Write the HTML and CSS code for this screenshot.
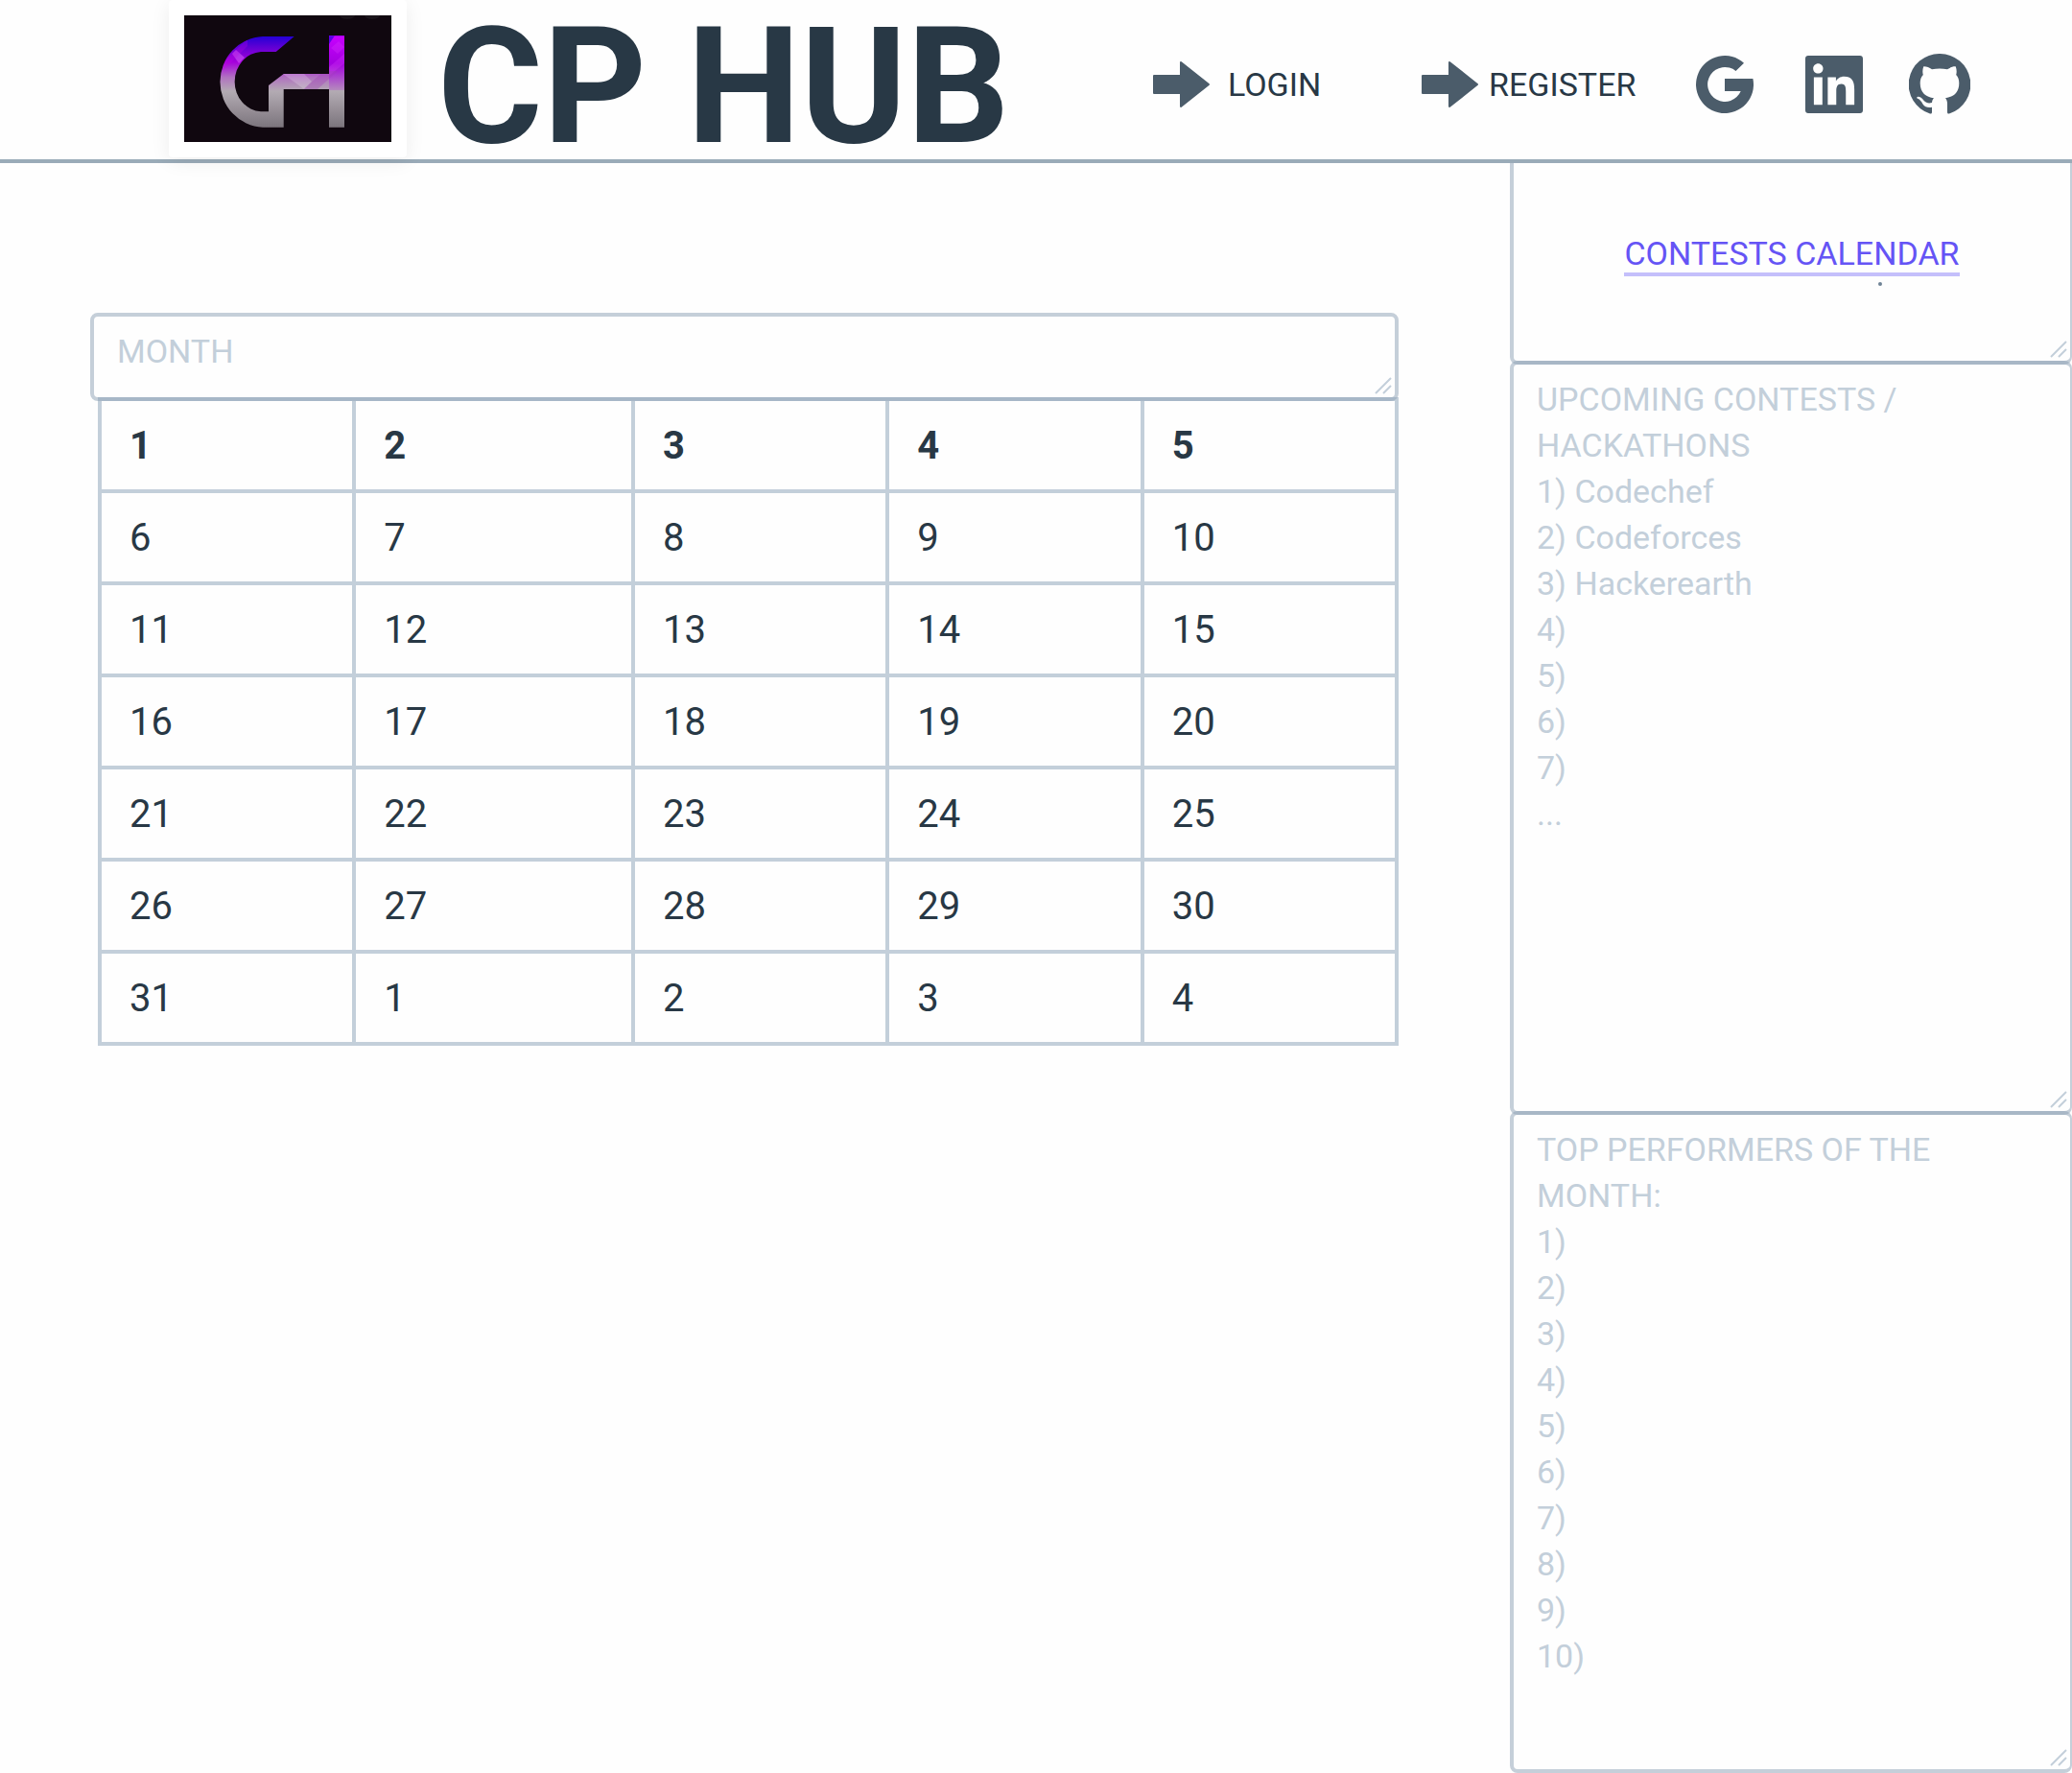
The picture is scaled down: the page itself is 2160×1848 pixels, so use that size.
FILE: index.html
```html
<!DOCTYPE html>
<html lang="en">
<head>
<meta charset="utf-8">
<meta name="viewport" content="width=device-width, initial-scale=1">
<title>CP HUB</title>
<link rel="stylesheet" href="styles.css">
</head>
<body>
<header class="header">
  <div class="logo-card">
    <svg class="logo" viewBox="0 0 216 132" role="img" aria-label="GH logo">
      <defs>
        <linearGradient id="mark" gradientUnits="userSpaceOnUse" x1="0" y1="22" x2="0" y2="117">
          <stop offset="0" stop-color="#2400d6"/>
          <stop offset=".14" stop-color="#6a00d4"/>
          <stop offset=".28" stop-color="#a500dc"/>
          <stop offset=".45" stop-color="#b173c0"/>
          <stop offset=".6" stop-color="#b3abb3"/>
          <stop offset="1" stop-color="#7b747c"/>
        </linearGradient>
        <linearGradient id="stem" gradientUnits="userSpaceOnUse" x1="0" y1="22" x2="0" y2="78">
          <stop offset="0" stop-color="#c800ff"/>
          <stop offset=".5" stop-color="#a400e0"/>
          <stop offset="1" stop-color="#b48abd"/>
        </linearGradient>
        <clipPath id="shape">
          <path d="M114.7 22H82A46.7 47.4 0 0 0 82 116.7H103.7V77H151V116.7H167V21.3H151V61H103.7L88 73V100.3H80A29 31.2 0 0 1 80 38H95.7Z"/>
        </clipPath>
      </defs>
      <rect width="216" height="132" fill="#10070f"/>
      <path d="M162 0h16a8 4 0 0 1-16 0M188 0h16a8 4 0 0 1-16 0" fill="#1a141a"/>
      <g clip-path="url(#shape)">
        <rect width="216" height="132" fill="url(#mark)"/>
        <rect x="151" y="21" width="16" height="57" fill="url(#stem)"/>
        <path d="M151 21h6l-6 9z" fill="#5a00e8"/>
        <path d="M153 34l8-7 6 6-7 7zM151 54l16-14v10l-16 13z" fill="#e040ff" opacity=".25"/>
        <path d="M124 77l22-19h14l-21 19z" fill="#a040b8" opacity=".35"/>
        <path d="M103 61h22l8 8-8 8z" fill="#fff" opacity=".2"/>
        <path d="M50 40l4-4 9 8-6 6z" fill="#e070ff" opacity=".45"/>
        <path d="M40 50l26-26v8L40 58z" fill="#c800e8" opacity=".25"/>
      </g>
    </svg>
  </div>
  <h1 class="title">CP HUB</h1>
  <nav class="nav">
    <a class="nav-link nav-link-login" href="#login">
      <svg class="arrow" viewBox="0 0 60 50" aria-hidden="true"><path d="M1 16h28V2l29 23-29 23V34H1z"/></svg>
      LOGIN
    </a>
    <a class="nav-link nav-link-register" href="#register">
      <svg class="arrow" viewBox="0 0 60 50" aria-hidden="true"><path d="M1 16h28V2l29 23-29 23V34H1z"/></svg>
      REGISTER
    </a>
    <div class="social">
      <a href="#google" aria-label="Google"><svg class="social-icon" viewBox="0 0 64 64"><path d="M52 9.7A30 30 0 1 0 61.4 26H32V39H48.7A18 18 0 1 1 43.5 18Z"/></svg></a>
      <a href="#linkedin" aria-label="LinkedIn"><svg class="social-icon" viewBox="-1.6 -.8 25.6 25.6"><path d="M20.447 20.452h-3.554v-5.569c0-1.328-.027-3.037-1.852-3.037-1.853 0-2.136 1.445-2.136 2.939v5.667H9.351V9h3.414v1.561h.046c.477-.9 1.637-1.85 3.37-1.85 3.601 0 4.267 2.37 4.267 5.455v6.286zM5.337 7.433c-1.144 0-2.063-.926-2.063-2.065 0-1.138.92-2.063 2.063-2.063 1.14 0 2.064.925 2.064 2.063 0 1.139-.925 2.065-2.064 2.065zm1.782 13.019H3.555V9h3.564v11.452zM22.8 0H1.2C.5 0 0 .5 0 1.2v21.6C0 23.5.5 24 1.2 24h21.6c.7 0 1.2-.5 1.2-1.2V1.2C24 .5 23.5 0 22.8 0z"/></svg></a>
      <a href="#github" aria-label="GitHub"><svg class="social-icon" viewBox="0 0 64 64"><path d="M32 0A32 32 0 0 0 22 62.500Q24 63 24 61V55.700C20 56.300 17 56 14.500 52.500C13 50 11.500 47.500 9 46.800C7.800 46.300 8 45 9.500 44.800C12.500 44.500 14 47 15.700 49C18 51.600 21 51.800 24 51C24.200 49 24.800 47.500 26 46.300C18 45 11.700 41 11.700 30.700C11.700 27 12.700 24 14.800 22C14 19.500 14.200 16 15.200 13.400C18 13.200 21 14.200 24 16.300C29 15.200 35 15.200 40 16.300C43 14.200 46 13.200 48.800 13.400C49.800 16 50 19.500 49.200 22C51.300 24 52.300 27 52.300 30.700C52.300 41 46 45 38 46.300C39.500 48 40 50 40 52V61Q40 63 42 62.500A32 32 0 0 0 32 0Z"/></svg></a>
    </div>
  </nav>
</header>
<div class="content">
  <main class="calendar">
    <div class="panel panel-month">
      <textarea class="panel-text" aria-label="Month">MONTH</textarea>
      <svg class="grip" viewBox="0 0 18 18" aria-hidden="true"><path d="M1 17 17 1M9 17l8-8"/></svg>
    </div>
    <table class="days">
      <colgroup><col class="col"><col class="col-wide"><col class="col"><col class="col"><col class="col"></colgroup>
      <thead>
        <tr><th>1</th><th>2</th><th>3</th><th>4</th><th>5</th></tr>
      </thead>
      <tbody>
        <tr><td>6</td><td>7</td><td>8</td><td>9</td><td>10</td></tr>
        <tr><td>11</td><td>12</td><td>13</td><td>14</td><td>15</td></tr>
        <tr><td>16</td><td>17</td><td>18</td><td>19</td><td>20</td></tr>
        <tr><td>21</td><td>22</td><td>23</td><td>24</td><td>25</td></tr>
        <tr><td>26</td><td>27</td><td>28</td><td>29</td><td>30</td></tr>
        <tr><td>31</td><td>1</td><td>2</td><td>3</td><td>4</td></tr>
      </tbody>
    </table>
  </main>
  <aside class="sidebar">
    <section class="panel panel-link">
      <a class="calendar-link" href="#calendar">CONTESTS CALENDAR</a>
      <span class="dot"></span>
      <svg class="grip" viewBox="0 0 18 18" aria-hidden="true"><path d="M1 17 17 1M9 17l8-8"/></svg>
    </section>
    <section class="panel panel-upcoming">
      <textarea class="panel-text" aria-label="Upcoming contests and hackathons">UPCOMING CONTESTS /
HACKATHONS
1) Codechef
2) Codeforces
3) Hackerearth
4)
5)
6)
7)
...</textarea>
      <svg class="grip" viewBox="0 0 18 18" aria-hidden="true"><path d="M1 17 17 1M9 17l8-8"/></svg>
    </section>
    <section class="panel panel-top">
      <textarea class="panel-text" aria-label="Top performers of the month">TOP PERFORMERS OF THE
MONTH:
1)
2)
3)
4)
5)
6)
7)
8)
9)
10)</textarea>
      <svg class="grip" viewBox="0 0 18 18" aria-hidden="true"><path d="M1 17 17 1M9 17l8-8"/></svg>
    </section>
  </aside>
</div>
</body>
</html>
```
FILE: styles.css
```css
* {
  box-sizing: border-box;
}

body {
  display: flex;
  flex-direction: column;
  min-height: 100vh;
  margin: 0;
  background: #fefefe;
  color: #283845;
  font-family: Roboto, "Liberation Sans", sans-serif;
  font-size: 34px;
  line-height: 48px;
}

a {
  color: inherit;
  text-decoration: none;
}

.header {
  display: flex;
  align-items: flex-start;
  height: 170px;
  padding: 0 106px 0 176px;
  border-bottom: 4px solid #9aabb8;
}

.logo-card {
  flex: none;
  padding: 16px;
  border-radius: 4px;
  background: #fff;
  box-shadow: 0 4px 20px rgba(0, 0, 0, 0.07);
}

.logo {
  display: block;
  width: 216px;
  height: 132px;
}

.title {
  margin: 0 0 0 32px;
  font-size: 168px;
  line-height: 182px;
  font-weight: 700;
  white-space: nowrap;
}

.nav {
  display: flex;
  align-items: center;
  height: 176px;
  margin-left: auto;
}

.nav-link {
  display: flex;
  align-items: center;
}

.nav-link-login {
  gap: 18px;
  width: 280px;
}

.nav-link-register {
  gap: 10px;
  width: 284px;
}

.arrow {
  flex: none;
  width: 60px;
  height: 50px;
  fill: #4b5c6a;
  stroke: #4b5c6a;
  stroke-width: 2;
  stroke-linejoin: round;
}

.social {
  display: flex;
  gap: 48px;
}

.social-icon {
  display: block;
  width: 64px;
  height: 64px;
  fill: #4b5c6a;
}

.content {
  flex: 1;
  display: grid;
  grid-template-columns: 1fr 586px;
}

.calendar {
  padding: 156px 116px 0 94px;
}

.panel {
  position: relative;
  border: 4px solid rgba(140, 160, 180, 0.5);
  border-radius: 8px;
}

.panel-text {
  display: block;
  width: 100%;
  height: 100%;
  padding: 12px 24px;
  border: 0;
  outline: 0;
  background: none;
  color: #c3cfda;
  font: inherit;
  resize: none;
  overflow: hidden;
}

.panel-month {
  height: 92px;
}

.grip {
  position: absolute;
  right: 3px;
  bottom: 3px;
  width: 18px;
  height: 18px;
  fill: none;
  stroke: #c3cfda;
  stroke-width: 2;
}

.days {
  width: calc(100% - 8px);
  margin: -4px 0 0 8px;
  border-collapse: collapse;
  table-layout: fixed;
  font-size: 40px;
}

.col-wide {
  width: 21.5%;
}

.days th,
.days td {
  height: 96px;
  padding: 2px 29px 0;
  border: 4px solid #c3cfda;
  text-align: left;
}

.sidebar {
  display: flex;
  flex-direction: column;
}

.sidebar .panel {
  border-right-width: 2px;
}

.panel-link {
  display: flex;
  flex-direction: column;
  align-items: center;
  height: 210px;
  padding-top: 74px;
}

.sidebar .panel-link {
  border-top: 0;
  border-top-left-radius: 0;
  border-top-right-radius: 0;
}

.calendar-link {
  border-bottom: 4px solid #c4bffb;
  color: #6554f5;
  line-height: 40px;
}

.dot {
  position: absolute;
  top: 124px;
  left: 380px;
  width: 4px;
  height: 4px;
  border-radius: 2px;
  background: #6f8496;
}

.panel-upcoming {
  height: 786px;
  margin-top: -4px;
}

.panel-top {
  flex: 1;
  min-height: 680px;
  margin-top: -4px;
}
```
